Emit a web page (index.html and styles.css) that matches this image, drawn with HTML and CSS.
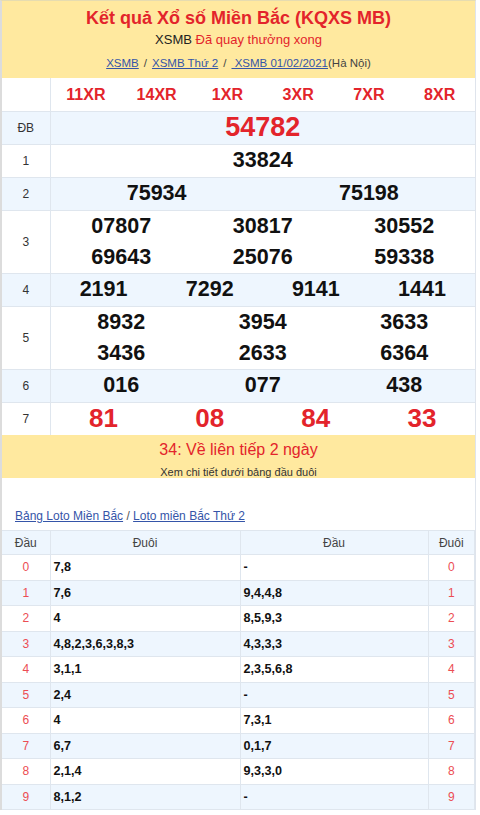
FILE: index.html
```html
<!DOCTYPE html>
<html lang="vi">
<head>
<meta charset="utf-8">
<link rel="stylesheet" href="styles.css">
</head>
<body>
<div class="page">
  <div class="head">
    <h1 class="title">Kết quả Xổ số Miền Bắc (KQXS MB)</h1>
    <div class="sub">XSMB <span class="red">Đã quay thưởng xong</span></div>
    <div class="crumbs"><a href="#">XSMB</a><span class="sep">/</span><a href="#">XSMB Thứ 2</a><span class="sep">/</span><a href="#"> XSMB 01/02/2021</a><span class="gray">(Hà Nội)</span></div>
  </div>
  <table class="kq">
    <tr class="codes">
      <td class="lbl"></td>
      <td class="vals"><div class="g g6"><span>11XR</span><span>14XR</span><span>1XR</span><span>3XR</span><span>7XR</span><span>8XR</span></div></td>
    </tr>
    <tr class="alt">
      <td class="lbl">ĐB</td>
      <td class="vals"><div class="g g1 db"><span>54782</span></div></td>
    </tr>
    <tr>
      <td class="lbl">1</td>
      <td class="vals"><div class="g g1"><span>33824</span></div></td>
    </tr>
    <tr class="alt">
      <td class="lbl">2</td>
      <td class="vals"><div class="g g2"><span>75934</span><span>75198</span></div></td>
    </tr>
    <tr>
      <td class="lbl">3</td>
      <td class="vals"><div class="g g3 two"><span>07807</span><span>30817</span><span>30552</span><span>69643</span><span>25076</span><span>59338</span></div></td>
    </tr>
    <tr class="alt">
      <td class="lbl">4</td>
      <td class="vals"><div class="g g4"><span>2191</span><span>7292</span><span>9141</span><span>1441</span></div></td>
    </tr>
    <tr>
      <td class="lbl">5</td>
      <td class="vals"><div class="g g3 two"><span>8932</span><span>3954</span><span>3633</span><span>3436</span><span>2633</span><span>6364</span></div></td>
    </tr>
    <tr class="alt">
      <td class="lbl">6</td>
      <td class="vals"><div class="g g3"><span>016</span><span>077</span><span>438</span></div></td>
    </tr>
    <tr>
      <td class="lbl">7</td>
      <td class="vals"><div class="g g4 g7"><span>81</span><span>08</span><span>84</span><span>33</span></div></td>
    </tr>
  </table>
  <div class="banner">
    <div class="b1">34: Về liên tiếp 2 ngày</div>
    <div class="b2">Xem chi tiết dưới bảng đầu đuôi</div>
  </div>
  <div class="lotolinks"><a href="#">Bảng Loto Miền Bắc</a> / <a href="#">Loto miền Bắc Thứ 2</a></div>
  <table class="loto">
    <tr class="hd"><td class="c1">Đầu</td><td class="c2">Đuôi</td><td class="c3">Đầu</td><td class="c4">Đuôi</td></tr>
    <tr><td class="n">0</td><td class="v">7,8</td><td class="v">-</td><td class="n">0</td></tr>
    <tr class="alt"><td class="n">1</td><td class="v">7,6</td><td class="v">9,4,4,8</td><td class="n">1</td></tr>
    <tr><td class="n">2</td><td class="v">4</td><td class="v">8,5,9,3</td><td class="n">2</td></tr>
    <tr class="alt"><td class="n">3</td><td class="v">4,8,2,3,6,3,8,3</td><td class="v">4,3,3,3</td><td class="n">3</td></tr>
    <tr><td class="n">4</td><td class="v">3,1,1</td><td class="v">2,3,5,6,8</td><td class="n">4</td></tr>
    <tr class="alt"><td class="n">5</td><td class="v">2,4</td><td class="v">-</td><td class="n">5</td></tr>
    <tr><td class="n">6</td><td class="v">4</td><td class="v">7,3,1</td><td class="n">6</td></tr>
    <tr class="alt"><td class="n">7</td><td class="v">6,7</td><td class="v">0,1,7</td><td class="n">7</td></tr>
    <tr><td class="n">8</td><td class="v">2,1,4</td><td class="v">9,3,3,0</td><td class="n">8</td></tr>
    <tr class="alt"><td class="n">9</td><td class="v">8,1,2</td><td class="v">-</td><td class="n">9</td></tr>
  </table>
</div>
</body>
</html>
```

FILE: styles.css
```css
* { box-sizing: border-box; }
html, body { margin: 0; padding: 0; background: #fff; }
body { font-family: "Liberation Sans", Arial, sans-serif; color: #222; }
.page {
  width: 476px;
  border-left: 2px solid #dcdcdc;
  border-right: 1px solid #dfe4ec;
  border-top: 1px solid #e6dcb0;
}
a { color: #3555a8; text-decoration: underline; }
.red { color: #e3242b; }
.gray { color: #444; }
.head {
  background: #ffe99f;
  text-align: center;
  height: 77px;
  padding-top: 5px;
}
.title {
  margin: 0;
  font-size: 18px;
  line-height: 24px;
  color: #e3242b;
  font-weight: bold;
}
.sub { font-size: 13px; line-height: 16px; margin-top: 2px; color: #222; }
.crumbs { font-size: 11.5px; line-height: 16px; margin-top: 7px; color: #444; }
.crumbs .sep { margin: 0 5px; }

table { border-collapse: collapse; width: 100%; }
.kq td { border-top: 1px solid #dfe6ee; padding: 0; }
.kq tr:first-child td { border-top: none; }
.kq .lbl {
  width: 48px;
  border-right: 1px solid #dfe6ee;
  text-align: center;
  font-size: 12px;
  color: #333;
}
.kq tr { height: 33px; }
.kq tr.alt { background: #eef6fe; }
.g { display: grid; text-align: center; font-weight: bold; font-size: 21.5px; color: #111; }
.g span { display: block; line-height: 31px; }
.g1 { grid-template-columns: 1fr; }
.g2 { grid-template-columns: 1fr 1fr; }
.g3 { grid-template-columns: 1fr 1fr 1fr; }
.g4 { grid-template-columns: 1fr 1fr 1fr 1fr; }
.g6 { grid-template-columns: repeat(6, 1fr); }
.codes .g { color: #e3242b; font-size: 16px; }
.codes td { height: 32px; }
.db { color: #e3242b; font-size: 27px; }
.g7 { color: #e3242b; font-size: 26px; }

.banner {
  background: #ffe99f;
  text-align: center;
  height: 43px;
  padding-top: 5px;
}
.b1 { color: #e3242b; font-size: 16px; line-height: 19px; }
.b2 { color: #333; font-size: 11px; line-height: 14px; margin-top: 6px; }

.lotolinks {
  font-size: 12px;
  padding: 30px 0 6px 13px;
  line-height: 16px;
  color: #555;
}

.loto { border: 1px solid #dfe6ee; border-left: none; }
.loto td {
  border: 1px solid #dfe6ee;
  font-size: 12px;
  height: 25.5px;
  padding: 0;
}
.loto td:first-child { border-left: none; }
.loto .hd { background: #eef6fe; }
.loto .hd td { text-align: center; color: #444; height: 24px; }
.loto .c1 { width: 48px; }
.loto .c2 { width: 190px; }
.loto .c3 { width: 188px; }
.loto tr.alt { background: #eef6fe; }
.loto .n { text-align: center; color: #ec4d53; }
.loto .v { font-weight: bold; color: #111; padding-left: 3px; font-size: 12.6px; }
```
